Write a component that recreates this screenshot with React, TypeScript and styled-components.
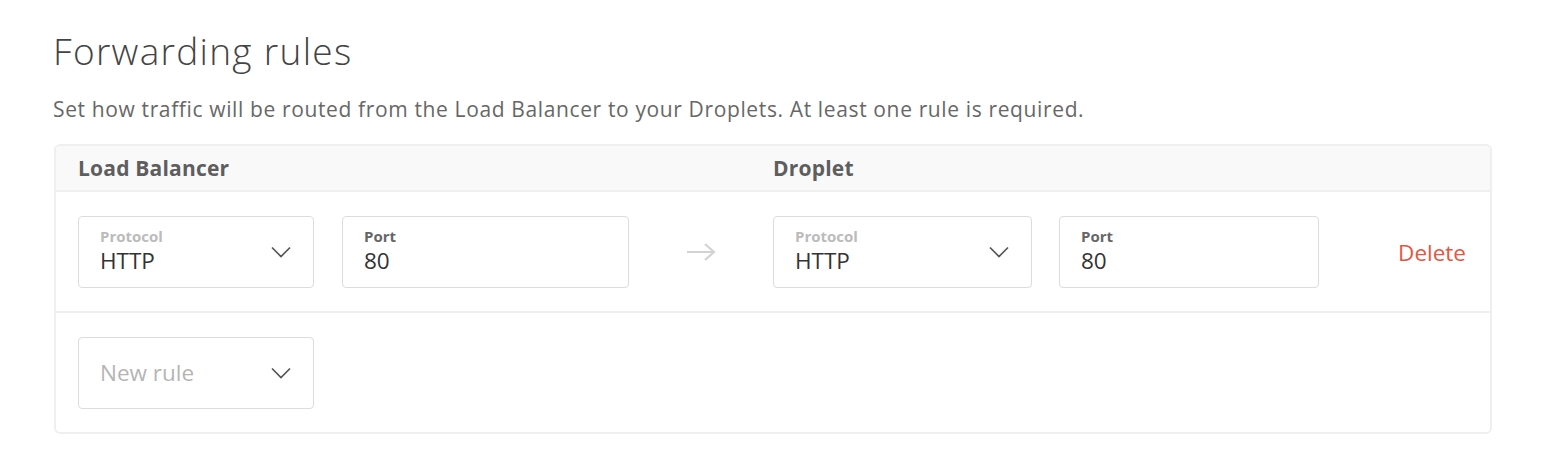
import React from "react";
import styled, { createGlobalStyle } from "styled-components";

const Global = createGlobalStyle`
  html, body { margin: 0; padding: 0; background: #fff; }
  body { font-family: "Open Sans", "Noto Sans", sans-serif; -webkit-font-smoothing: antialiased; }
`;

const Page = styled.div`
  padding: 27px 56px 0 53px;
  width: 1548px;
  box-sizing: border-box;
`;

const Title = styled.h1`
  margin: 0;
  font-size: 37px;
  font-weight: 300;
  letter-spacing: 1.3px;
  color: #444;
  line-height: 48px;
`;

const Lead = styled.p`
  margin: 20px 0 0;
  font-size: 21px;
  letter-spacing: 0.63px;
  color: #676767;
  line-height: 28px;
`;

const Card = styled.div`
  margin-top: 21px;
  margin-left: 1px;
  width: 1438px;
  box-sizing: border-box;
  border: 2px solid #efefef;
  border-radius: 6px;
  overflow: hidden;
`;

const Header = styled.div`
  display: flex;
  height: 44px;
  align-items: center;
  background: #f9f9f9;
  border-bottom: 2px solid #efefef;
  padding-left: 22px;
`;

const HeadCell = styled.div<{ $w?: number }>`
  width: ${(p) => (p.$w ? `${p.$w}px` : "auto")};
  font-size: 21px;
  font-weight: 700;
  letter-spacing: 0.2px;
  color: #5e5e5e;
`;

const Row = styled.div<{ $last?: boolean }>`
  display: flex;
  align-items: center;
  padding: 24px 24px 23px 22px;
  border-bottom: ${(p) => (p.$last ? "none" : "2px solid #efefef")};
`;

const Field = styled.div<{ $w: number; $gap?: number }>`
  width: ${(p) => p.$w}px;
  margin-right: ${(p) => p.$gap ?? 0}px;
  height: 72px;
  box-sizing: border-box;
  border: 1px solid #dcdcdc;
  border-radius: 4px;
  display: flex;
  align-items: center;
  padding: 0 22px 0 21px;
`;

const FieldText = styled.div`
  flex: 1;
  display: flex;
  flex-direction: column;
`;

const Label = styled.span<{ $muted?: boolean }>`
  font-size: 15px;
  font-weight: 700;
  line-height: 18px;
  color: ${(p) => (p.$muted ? "#bbbbbb" : "#666")};
`;

const Value = styled.span<{ $placeholder?: boolean }>`
  font-size: 22.5px;
  line-height: 32px;
  color: ${(p) => (p.$placeholder ? "#b5b5b5" : "#333")};
`;

const ArrowCell = styled.div`
  width: 144px;
  display: flex;
  justify-content: center;
`;

const Spacer = styled.div`
  flex: 1;
`;

const DeleteLink = styled.a`
  font-size: 22.5px;
  color: #e8553e;
  cursor: pointer;
`;

const Chevron = () => (
  <svg width="20" height="12" viewBox="0 0 20 12" fill="none">
    <path d="M1 1.5 L10 10.5 L19 1.5" stroke="#555" strokeWidth="1.7" />
  </svg>
);

const Arrow = () => (
  <svg width="30" height="18" viewBox="0 0 30 18" fill="none">
    <path d="M1 9 H28 M19 1 L28 9 L19 17" stroke="#d3d3d3" strokeWidth="2.2" />
  </svg>
);

export default function App() {
  return (
    <>
      <Global />
      <Page>
        <Title>Forwarding rules</Title>
        <Lead>
          Set how traffic will be routed from the Load Balancer to your Droplets. At least one rule is required.
        </Lead>
        <Card>
          <Header>
            <HeadCell $w={695}>Load Balancer</HeadCell>
            <HeadCell>Droplet</HeadCell>
          </Header>
          <Row>
            <Field $w={236} $gap={28}>
              <FieldText>
                <Label $muted>Protocol</Label>
                <Value>HTTP</Value>
              </FieldText>
              <Chevron />
            </Field>
            <Field $w={287}>
              <FieldText>
                <Label>Port</Label>
                <Value>80</Value>
              </FieldText>
            </Field>
            <ArrowCell>
              <Arrow />
            </ArrowCell>
            <Field $w={259} $gap={27}>
              <FieldText>
                <Label $muted>Protocol</Label>
                <Value>HTTP</Value>
              </FieldText>
              <Chevron />
            </Field>
            <Field $w={260}>
              <FieldText>
                <Label>Port</Label>
                <Value>80</Value>
              </FieldText>
            </Field>
            <Spacer />
            <DeleteLink>Delete</DeleteLink>
          </Row>
          <Row $last>
            <Field $w={236}>
              <FieldText>
                <Value $placeholder>New rule</Value>
              </FieldText>
              <Chevron />
            </Field>
          </Row>
        </Card>
      </Page>
    </>
  );
}
